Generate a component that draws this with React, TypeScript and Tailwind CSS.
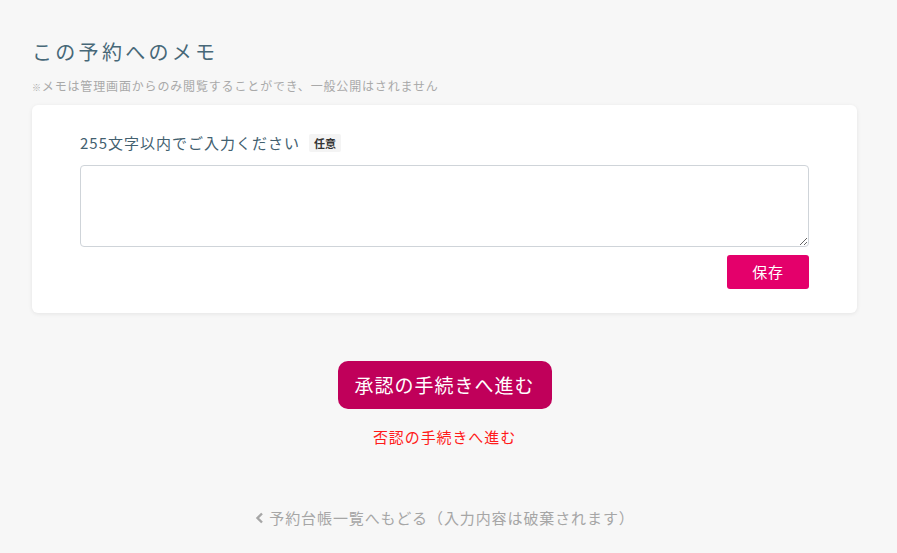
import React from "react";

export default function App() {
  return (
    <div
      className="min-h-[553px] w-full bg-[#f7f7f7] px-[32px] pt-[38px] tracking-[0.06em]"
      style={{ fontFamily: '"Noto Sans CJK JP", "Noto Sans", sans-serif' }}
    >
      <div className="w-[825px]">
        <h2 className="text-[20px] leading-[28px] tracking-[3.3px] text-[#476878]">この予約へのメモ</h2>
        <p className="mt-[11px] text-[12px] leading-[18px] tracking-[0.07em] text-[#a9a9a9]">
          <span className="text-[9px]">※</span>メモは管理画面からのみ閲覧することができ、一般公開はされません
        </p>

        <div className="mt-[8px] rounded-[6px] bg-white px-[48px] pb-[24px] pt-[27px] shadow-[0_1px_4px_rgba(0,0,0,0.08)]">
          <div className="flex items-center gap-[9px]">
            <span className="text-[15px] leading-[22px] tracking-[1px] text-[#42606f]">
              255文字以内でご入力ください
            </span>
            <span className="rounded-[2px] bg-[#f4f4f4] px-[5px] text-[11px] font-bold leading-[18px] tracking-normal text-[#333]">
              任意
            </span>
          </div>
          <textarea className="mt-[11px] block h-[82px] w-full rounded-[4px] border border-[#cfd4d9] bg-white p-2 text-[14px] outline-none" />
          <div className="mt-[8px] flex justify-end">
            <button
              type="button"
              className="h-[34px] w-[82px] rounded-[3px] bg-[#e4006b] text-[15px] tracking-[0.05em] text-white"
            >
              保存
            </button>
          </div>
        </div>

        <div className="mt-[48px] flex flex-col items-center">
          <button
            type="button"
            className="h-[48px] w-[214px] rounded-[10px] bg-[#c0005a] text-[19px] tracking-[1px] text-white"
          >
            承認の手続きへ進む
          </button>
          <a className="mt-[17px] text-[15px] leading-[22px] tracking-[0.9px] text-[#ff1a1a]">否認の手続きへ進む</a>
          <a className="mt-[59px] flex items-center gap-[4px] text-[15px] leading-[22px] tracking-[0.9px] text-[#a6a6a6]">
            <svg width="11" height="12" viewBox="0 0 10 12" fill="none">
              <path d="M7.5 1.5 3 6l4.5 4.5" stroke="#a6a6a6" strokeWidth="2.4" />
            </svg>
            予約台帳一覧へもどる（入力内容は破棄されます）
          </a>
        </div>
      </div>
    </div>
  );
}
